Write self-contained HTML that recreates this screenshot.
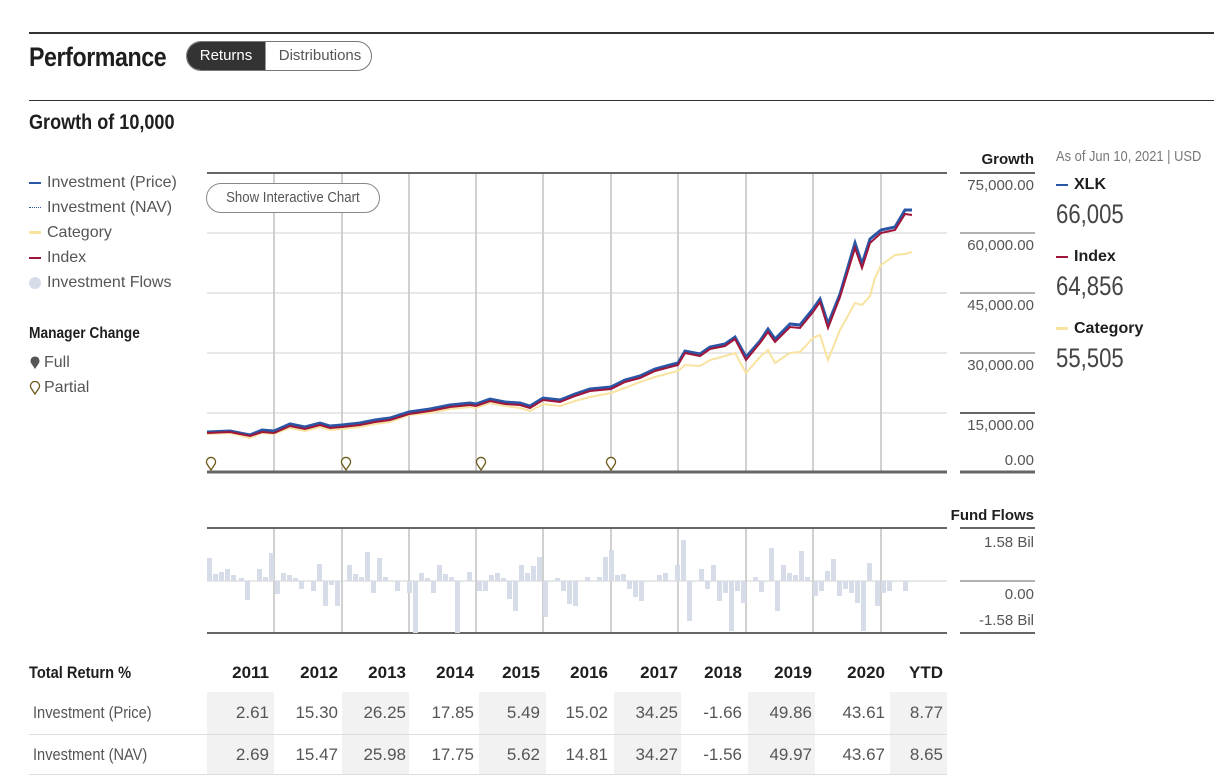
<!DOCTYPE html>
<html><head><meta charset="utf-8"><style>
body{margin:0;width:1226px;height:775px;overflow:hidden;background:#fff;font-family:"Liberation Sans Narrow","Liberation Sans",sans-serif;color:#1e1e1e;position:relative}
.a{position:absolute;white-space:nowrap}
.t{font-size:16px;color:#555}
.b{font-weight:bold}
.n{display:inline-block;transform:scaleX(.86);transform-origin:left center}
.m{display:inline-block;transform:scaleX(.82);transform-origin:left center}
</style></head><body>
<div class="a" style="left:29px;top:32px;width:1185px;height:2px;background:#333"></div>
<div class="a b" style="left:29px;top:42px;font-size:27px;letter-spacing:-0.5px"><span class="n">Performance</span></div>
<div class="a" style="left:186px;top:41px;width:186px;height:30px;border:1px solid #777;border-radius:15px;box-sizing:border-box;overflow:hidden">
<div class="a" style="left:0;top:0;width:78px;height:28px;background:#333;color:#fff;font-size:15px;line-height:28px;text-align:center">Returns</div>
<div class="a" style="left:78px;top:0;width:108px;height:28px;color:#555;font-size:15px;line-height:28px;text-align:center;border-left:1px solid #999">Distributions</div></div>
<div class="a" style="left:29px;top:100px;width:1185px;height:1px;background:#333"></div>
<div class="a b" style="left:29px;top:111px;font-size:21px"><span class="n">Growth of 10,000</span></div>

<div class="a t" style="left:29px;top:170px;line-height:25px">
<div><span style="display:inline-block;width:12px;height:2px;background:#2a56a6;vertical-align:middle;margin-right:6px"></span>Investment (Price)</div>
<div><span style="display:inline-block;width:12px;height:1px;border-top:1px dotted #2a56a6;vertical-align:middle;margin-right:6px"></span>Investment (NAV)</div>
<div><span style="display:inline-block;width:12px;height:3px;background:#f8e3a0;vertical-align:middle;margin-right:6px"></span>Category</div>
<div><span style="display:inline-block;width:12px;height:2px;background:#a0163a;vertical-align:middle;margin-right:6px"></span>Index</div>
<div><span style="display:inline-block;width:12px;height:12px;border-radius:6px;background:#d6dde9;vertical-align:middle;margin-right:6px"></span>Investment Flows</div>
</div>
<div class="a b" style="left:29px;top:325px;font-size:16px"><span class="n">Manager Change</span></div>
<div class="a t" style="left:29px;top:350px;line-height:25px">
<div><svg width="12" height="14" style="vertical-align:middle;margin-right:3px"><path d="M6 13 L2 7 A4.5 4.5 0 1 1 10 7Z" fill="#555"/></svg>Full</div>
<div><svg width="12" height="14" style="vertical-align:middle;margin-right:3px"><path d="M6 13 L2 7 A4.5 4.5 0 1 1 10 7Z" fill="#fff" stroke="#6b5a1a" stroke-width="1.3"/></svg>Partial</div>
</div>

<svg class="a" style="left:0;top:0" width="1226" height="775">
<g stroke="#d0d0d0" stroke-width="2">
<line x1="274" y1="173" x2="274" y2="472"/><line x1="342" y1="173" x2="342" y2="472"/><line x1="409" y1="173" x2="409" y2="472"/><line x1="476" y1="173" x2="476" y2="472"/><line x1="543" y1="173" x2="543" y2="472"/><line x1="611" y1="173" x2="611" y2="472"/><line x1="678" y1="173" x2="678" y2="472"/><line x1="746" y1="173" x2="746" y2="472"/><line x1="813" y1="173" x2="813" y2="472"/><line x1="881" y1="173" x2="881" y2="472"/>
<line x1="274" y1="528" x2="274" y2="633"/><line x1="342" y1="528" x2="342" y2="633"/><line x1="409" y1="528" x2="409" y2="633"/><line x1="476" y1="528" x2="476" y2="633"/><line x1="543" y1="528" x2="543" y2="633"/><line x1="611" y1="528" x2="611" y2="633"/><line x1="678" y1="528" x2="678" y2="633"/><line x1="746" y1="528" x2="746" y2="633"/><line x1="813" y1="528" x2="813" y2="633"/><line x1="881" y1="528" x2="881" y2="633"/>
</g>
<g stroke="#d0d0d0" stroke-width="1"><line x1="207" y1="233" x2="947" y2="233"/><line x1="207" y1="293" x2="947" y2="293"/><line x1="207" y1="353" x2="947" y2="353"/><line x1="207" y1="413" x2="947" y2="413"/><line x1="207" y1="581" x2="947" y2="581"/></g>
<line x1="207" y1="173" x2="947" y2="173" stroke="#666" stroke-width="2"/>
<line x1="207" y1="472" x2="947" y2="472" stroke="#666" stroke-width="3"/>
<line x1="207" y1="528" x2="947" y2="528" stroke="#666" stroke-width="2"/>
<line x1="207" y1="633" x2="947" y2="633" stroke="#666" stroke-width="2"/>
<g fill="#d6dde9">
<rect x="207" y="558" width="5" height="23"/><rect x="213" y="574" width="5" height="7"/><rect x="219" y="572" width="5" height="9"/><rect x="225" y="569" width="5" height="12"/><rect x="231" y="575" width="5" height="6"/><rect x="239" y="578" width="5" height="3"/><rect x="245" y="581" width="5" height="19"/><rect x="257" y="569" width="5" height="12"/><rect x="263" y="577" width="5" height="4"/><rect x="269" y="553" width="5" height="28"/><rect x="275" y="581" width="5" height="13"/><rect x="281" y="573" width="5" height="8"/><rect x="287" y="575" width="5" height="6"/><rect x="293" y="578" width="5" height="3"/><rect x="299" y="581" width="5" height="8"/><rect x="311" y="581" width="5" height="10"/><rect x="317" y="564" width="5" height="17"/><rect x="323" y="581" width="5" height="25"/><rect x="329" y="581" width="5" height="4"/><rect x="335" y="581" width="5" height="25"/><rect x="347" y="565" width="5" height="16"/><rect x="353" y="574" width="5" height="7"/><rect x="359" y="577" width="5" height="4"/><rect x="365" y="552" width="5" height="29"/><rect x="371" y="581" width="5" height="12"/><rect x="377" y="558" width="5" height="23"/><rect x="383" y="577" width="5" height="4"/><rect x="395" y="581" width="5" height="10"/><rect x="407" y="581" width="5" height="12"/><rect x="413" y="581" width="5" height="52"/><rect x="419" y="573" width="5" height="8"/><rect x="425" y="578" width="5" height="3"/><rect x="431" y="581" width="5" height="12"/><rect x="437" y="565" width="5" height="16"/><rect x="443" y="574" width="5" height="7"/><rect x="449" y="577" width="5" height="4"/><rect x="455" y="581" width="5" height="52"/><rect x="467" y="572" width="5" height="9"/><rect x="477" y="581" width="5" height="10"/><rect x="483" y="581" width="5" height="10"/><rect x="489" y="575" width="5" height="6"/><rect x="495" y="573" width="5" height="8"/><rect x="501" y="578" width="5" height="3"/><rect x="507" y="581" width="5" height="18"/><rect x="513" y="581" width="5" height="30"/><rect x="519" y="565" width="5" height="16"/><rect x="525" y="573" width="5" height="8"/><rect x="531" y="566" width="5" height="15"/><rect x="537" y="557" width="5" height="24"/><rect x="543" y="581" width="5" height="36"/><rect x="555" y="578" width="5" height="3"/><rect x="561" y="581" width="5" height="10"/><rect x="567" y="581" width="5" height="23"/><rect x="573" y="581" width="5" height="25"/><rect x="585" y="577" width="5" height="4"/><rect x="597" y="577" width="5" height="4"/><rect x="603" y="557" width="5" height="24"/><rect x="609" y="550" width="5" height="31"/><rect x="615" y="575" width="5" height="6"/><rect x="621" y="574" width="5" height="7"/><rect x="627" y="581" width="5" height="8"/><rect x="633" y="581" width="5" height="16"/><rect x="639" y="581" width="5" height="20"/><rect x="657" y="575" width="5" height="6"/><rect x="663" y="573" width="5" height="8"/><rect x="675" y="565" width="5" height="16"/><rect x="681" y="540" width="5" height="41"/><rect x="687" y="581" width="5" height="40"/><rect x="699" y="569" width="5" height="12"/><rect x="705" y="581" width="5" height="8"/><rect x="711" y="565" width="5" height="16"/><rect x="717" y="581" width="5" height="20"/><rect x="723" y="581" width="5" height="12"/><rect x="729" y="581" width="5" height="50"/><rect x="735" y="581" width="5" height="10"/><rect x="741" y="581" width="5" height="22"/><rect x="753" y="577" width="5" height="4"/><rect x="759" y="581" width="5" height="11"/><rect x="769" y="548" width="5" height="33"/><rect x="775" y="581" width="5" height="30"/><rect x="781" y="565" width="5" height="16"/><rect x="787" y="573" width="5" height="8"/><rect x="793" y="575" width="5" height="6"/><rect x="799" y="551" width="5" height="30"/><rect x="805" y="577" width="5" height="4"/><rect x="813" y="581" width="5" height="15"/><rect x="819" y="581" width="5" height="10"/><rect x="825" y="571" width="5" height="10"/><rect x="831" y="559" width="5" height="22"/><rect x="837" y="581" width="5" height="15"/><rect x="843" y="581" width="5" height="8"/><rect x="849" y="581" width="5" height="12"/><rect x="855" y="581" width="5" height="22"/><rect x="861" y="581" width="5" height="50"/><rect x="867" y="563" width="5" height="18"/><rect x="875" y="581" width="5" height="25"/><rect x="881" y="581" width="5" height="12"/><rect x="887" y="581" width="5" height="10"/><rect x="903" y="581" width="5" height="10"/>
</g>
<polyline fill="none" stroke="#f8e3a0" stroke-width="2" points="207,434 230,433 250,438 262,433 274,434 290,428 305,431 320,427 330,430 342,429 360,427 375,424 390,422 409,415 430,413 450,409 470,407 476,408 490,403 505,406 520,408 530,411 543,404 560,406 575,401 590,397 611,393 625,388 640,382 655,377 670,373 678,371 685,365 700,366 710,360 725,356 735,353 746,373 760,357 768,350 775,363 790,353 800,352 813,338 820,335 828,360 840,330 855,303 862,305 870,296 875,278 881,265 895,255 905,254 912,252"/>
<polyline fill="none" stroke="#2a56a6" stroke-width="3" points="207,432 230,431 250,435 262,430 274,431 290,424 305,427 320,423 330,426 342,425 360,423 375,420 390,418 409,412 430,409 450,405 470,403 476,404 490,399 505,402 520,403 530,406 543,398 560,400 575,394 590,389 611,387 625,380 640,376 655,369 670,365 678,363 685,351 700,354 710,347 725,344 735,337 746,357 760,341 768,329 775,339 790,324 800,325 813,309 820,299 828,324 840,294 855,243 862,264 870,239 881,230 895,227 905,210 912,210"/>
<polyline fill="none" stroke="#a0163a" stroke-width="2" points="207,433 230,432 250,436 262,432 274,433 290,426 305,429 320,425 330,428 342,427 360,425 375,422 390,420 409,414 430,411 450,407 470,405 476,406 490,401 505,404 520,405 530,408 543,400 560,402 575,396 590,391 611,389 625,382 640,378 655,371 670,367 678,365 685,353 700,356 710,349 725,346 735,339 746,360 760,343 768,332 775,342 790,327 800,328 813,312 820,302 828,328 840,297 855,248 862,268 870,243 881,233 895,230 905,214 912,215"/>
<g fill="#fff" stroke="#6b5a1a" stroke-width="1.3">
<path d="M211 470 L207 464 A4.5 4.5 0 1 1 215 464Z"/><path d="M346 470 L342 464 A4.5 4.5 0 1 1 350 464Z"/><path d="M481 470 L477 464 A4.5 4.5 0 1 1 485 464Z"/><path d="M611 470 L607 464 A4.5 4.5 0 1 1 615 464Z"/></g>
<g stroke="#666" stroke-width="2"><line x1="960" y1="173" x2="1035" y2="173"/><line x1="960" y1="233" x2="1035" y2="233" stroke-width="1"/><line x1="960" y1="293" x2="1035" y2="293" stroke-width="1"/><line x1="960" y1="353" x2="1035" y2="353" stroke-width="1"/><line x1="960" y1="413" x2="1035" y2="413"/><line x1="960" y1="472" x2="1035" y2="472" stroke-width="3"/>
<line x1="960" y1="528" x2="1035" y2="528"/><line x1="960" y1="581" x2="1035" y2="581" stroke-width="1"/><line x1="960" y1="633" x2="1035" y2="633"/></g>
</svg>
<div class="a" style="left:206px;top:183px;width:172px;height:28px;border:1px solid #888;border-radius:15px;color:#555;font-size:15px;line-height:27px;text-align:center;background:#fff"><span style="display:inline-block;transform:scaleX(.88)">Show Interactive Chart</span></div>

<div class="a" style="left:940px;top:150px;width:94px;text-align:right;font-size:15px;color:#555;line-height:20px">
<div class="b" style="color:#1e1e1e">Growth</div>
<div style="position:absolute;right:0;top:26px">75,000.00</div>
<div style="position:absolute;right:0;top:86px">60,000.00</div>
<div style="position:absolute;right:0;top:146px">45,000.00</div>
<div style="position:absolute;right:0;top:206px">30,000.00</div>
<div style="position:absolute;right:0;top:266px">15,000.00</div>
<div style="position:absolute;right:0;top:301px">0.00</div>
<div class="b" style="position:absolute;right:0;top:356px;color:#1e1e1e">Fund Flows</div>
<div style="position:absolute;right:0;top:383px">1.58 Bil</div>
<div style="position:absolute;right:0;top:435px">0.00</div>
<div style="position:absolute;right:0;top:461px">-1.58 Bil</div>
</div>
<div class="a" style="left:1056px;top:148px;font-size:15px;color:#777"><span class="n">As of Jun 10, 2021 | USD</span></div>
<div class="a b" style="left:1056px;top:176px;font-size:16px"><span style="display:inline-block;width:12px;height:2px;background:#2a56a6;vertical-align:middle;margin-right:6px"></span>XLK</div>
<div class="a" style="left:1056px;top:199px;font-size:27px;color:#444"><span class="m">66,005</span></div>
<div class="a b" style="left:1056px;top:248px;font-size:16px"><span style="display:inline-block;width:12px;height:2px;background:#a0163a;vertical-align:middle;margin-right:6px"></span>Index</div>
<div class="a" style="left:1056px;top:271px;font-size:27px;color:#444"><span class="m">64,856</span></div>
<div class="a b" style="left:1056px;top:320px;font-size:16px"><span style="display:inline-block;width:12px;height:3px;background:#f8e3a0;vertical-align:middle;margin-right:6px"></span>Category</div>
<div class="a" style="left:1056px;top:343px;font-size:27px;color:#444"><span class="m">55,505</span></div>

<div class="a" style="left:207px;top:692px;width:67px;height:83px;background:#f2f2f2"></div>
<div class="a" style="left:342px;top:692px;width:67px;height:83px;background:#f2f2f2"></div>
<div class="a" style="left:479px;top:692px;width:67px;height:83px;background:#f2f2f2"></div>
<div class="a" style="left:614px;top:692px;width:67px;height:83px;background:#f2f2f2"></div>
<div class="a" style="left:748px;top:692px;width:67px;height:83px;background:#f2f2f2"></div>
<div class="a" style="left:890px;top:692px;width:57px;height:83px;background:#f2f2f2"></div>
<div class="a" style="left:29px;top:734px;width:918px;height:1px;background:#ddd"></div>
<div class="a" style="left:29px;top:774px;width:918px;height:1px;background:#ddd"></div>
<div class="a b" style="left:29px;top:663px;font-size:17px"><span class="n">Total Return %</span></div>
<div class="a" style="left:33px;top:703px;font-size:17px;color:#555"><span class="n">Investment (Price)</span></div>
<div class="a" style="left:33px;top:745px;font-size:17px;color:#555"><span class="n">Investment (NAV)</span></div>
<div class="a" style="left:0;top:663px;font-size:17px;line-height:20px">
<div class="b" style="position:absolute;left:0;top:0;width:943px">
<span class="a" style="right:674px">2011</span><span class="a" style="right:605px">2012</span><span class="a" style="right:537px">2013</span><span class="a" style="right:469px">2014</span><span class="a" style="right:403px">2015</span><span class="a" style="right:335px">2016</span><span class="a" style="right:265px">2017</span><span class="a" style="right:201px">2018</span><span class="a" style="right:131px">2019</span><span class="a" style="right:58px">2020</span><span class="a" style="right:0">YTD</span></div>
<div style="position:absolute;left:0;top:40px;width:943px;color:#555">
<span class="a" style="right:674px">2.61</span><span class="a" style="right:605px">15.30</span><span class="a" style="right:537px">26.25</span><span class="a" style="right:469px">17.85</span><span class="a" style="right:403px">5.49</span><span class="a" style="right:335px">15.02</span><span class="a" style="right:265px">34.25</span><span class="a" style="right:201px">-1.66</span><span class="a" style="right:131px">49.86</span><span class="a" style="right:58px">43.61</span><span class="a" style="right:0">8.77</span></div>
<div style="position:absolute;left:0;top:82px;width:943px;color:#555">
<span class="a" style="right:674px">2.69</span><span class="a" style="right:605px">15.47</span><span class="a" style="right:537px">25.98</span><span class="a" style="right:469px">17.75</span><span class="a" style="right:403px">5.62</span><span class="a" style="right:335px">14.81</span><span class="a" style="right:265px">34.27</span><span class="a" style="right:201px">-1.56</span><span class="a" style="right:131px">49.97</span><span class="a" style="right:58px">43.67</span><span class="a" style="right:0">8.65</span></div>
</div>
</body></html>
